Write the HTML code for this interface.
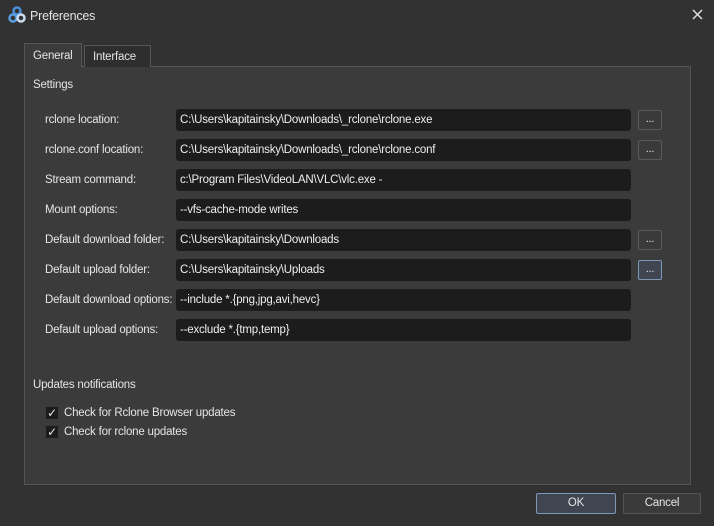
<!DOCTYPE html>
<html><head><style>
*{box-sizing:border-box}
body{margin:0;width:714px;height:526px;background:#323232;font-family:"Liberation Sans",sans-serif;font-size:11.5px;letter-spacing:-0.2px;color:#e6e6e6;position:relative;overflow:hidden}
.a{position:absolute}
.title{left:30px;top:9px;font-size:12.5px}
.panel{left:24px;top:66px;width:667px;height:419px;background:#3b3b3b;border:1px solid #555}
.tab{top:45px;height:22px;border:1px solid #555;border-bottom:none;padding:4px 8px 0}
.lbl{left:45px;white-space:nowrap}
.inp{left:176px;width:455px;height:22px;background:#1c1c1c;border-radius:3px;padding:5px 4px 0;color:#eee;white-space:nowrap}
.btn{left:638px;width:24px;height:20px;border:1px solid #5a5a5a;border-radius:2px;background:#3a3a3a;text-align:center;font-size:11px;line-height:16px}
.pb{height:21px;border:1px solid #555;border-radius:2px;background:#3a3a3a;text-align:center;line-height:19px}
.chk{left:46px;width:12px;height:12px;background:#1c1c1c;font-size:12px;line-height:12px;text-align:center}
</style></head><body>
<svg class="a" style="left:8px;top:6px" width="18" height="18" viewBox="0 0 18 18"><circle cx="9" cy="5" r="3.5" fill="none" stroke="#4a90d9" stroke-width="2.5"/><circle cx="5" cy="12" r="3.5" fill="none" stroke="#5aa0e0" stroke-width="2.5"/><circle cx="13" cy="12" r="3.5" fill="none" stroke="#cde" stroke-width="2.5"/></svg>
<div class="a title">Preferences</div>
<svg class="a" style="left:692px;top:9px" width="11" height="11"><path d="M1 1L10 10M10 1L1 10" stroke="#ddd" stroke-width="1.5"/></svg>
<div class="a panel"></div>
<div class="a tab" style="left:24px;top:43px;height:24px;background:#3b3b3b;width:58px;padding-top:6px">General</div>
<div class="a tab" style="left:84px;width:67px;background:#2e2e2e;padding-top:5px">Interface</div>
<div class="a" style="left:33px;top:79px">Settings</div>

<div class="a lbl" style="top:114px">rclone location:</div>
<div class="a inp" style="top:109px">C:\Users\kapitainsky\Downloads\_rclone\rclone.exe</div>
<div class="a btn" style="top:110px">...</div>
<div class="a lbl" style="top:144px">rclone.conf location:</div>
<div class="a inp" style="top:139px">C:\Users\kapitainsky\Downloads\_rclone\rclone.conf</div>
<div class="a btn" style="top:140px">...</div>
<div class="a lbl" style="top:174px">Stream command:</div>
<div class="a inp" style="top:169px">c:\Program Files\VideoLAN\VLC\vlc.exe -</div>
<div class="a lbl" style="top:204px">Mount options:</div>
<div class="a inp" style="top:199px">--vfs-cache-mode writes</div>
<div class="a lbl" style="top:234px">Default download folder:</div>
<div class="a inp" style="top:229px">C:\Users\kapitainsky\Downloads</div>
<div class="a btn" style="top:230px">...</div>
<div class="a lbl" style="top:264px">Default upload folder:</div>
<div class="a inp" style="top:259px">C:\Users\kapitainsky\Uploads</div>
<div class="a btn" style="top:260px;border-color:#7d98b8;background:#3f4652">...</div>
<div class="a lbl" style="top:294px">Default download options:</div>
<div class="a inp" style="top:289px">--include *.{png,jpg,avi,hevc}</div>
<div class="a lbl" style="top:324px">Default upload options:</div>
<div class="a inp" style="top:319px">--exclude *.{tmp,temp}</div>

<div class="a" style="left:33px;top:379px">Updates notifications</div>
<div class="a chk" style="top:407px">✓</div>
<div class="a" style="left:64px;top:407px">Check for Rclone Browser updates</div>
<div class="a chk" style="top:426px">✓</div>
<div class="a" style="left:64px;top:426px">Check for rclone updates</div>

<div class="a pb" style="left:536px;top:493px;width:80px;border-color:#7d98b8;background:#3f4652">OK</div>
<div class="a pb" style="left:623px;top:493px;width:78px">Cancel</div>
</body></html>
